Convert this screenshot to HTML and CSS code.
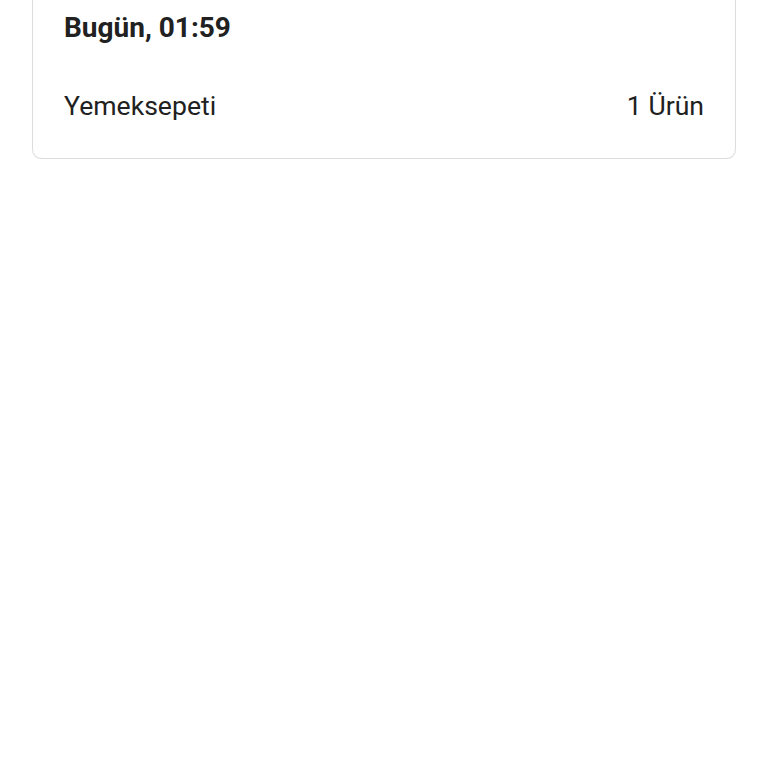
FILE: index.html
```html
<!doctype html>
<html>
    <head>
        <meta charset=utf-8>
        <title>Siparişler</title>
        <link rel="stylesheet" href="styles.css">
    </head>
    <body>
        <div class="order-card">
            <div class="order-date">Bugün, 01:59</div>
            <div class="order-row">
                <span>Yemeksepeti</span>
                <span>1 Ürün</span>
            </div>
        </div>
    </body>
</html>
```

FILE: styles.css
```css
* {
  margin: 0;
  padding: 0;
  box-sizing: border-box;
}

body {
  font-family: Roboto, "Noto Sans", sans-serif;
  background: #fff;
  color: #212121;
}

.order-card {
  margin: -30px 32px 0;
  padding: 40px 31px 36px;
  border: 1px solid #dcdcdc;
  border-radius: 10px;
  box-shadow: 0 1px 1px rgba(0, 0, 0, 0.06);
}

.order-date {
  font-size: 28px;
  font-weight: 700;
  line-height: 34px;
}

.order-row {
  display: flex;
  justify-content: space-between;
  margin-top: 45px;
  font-size: 26.6px;
  line-height: 32px;
}
```
